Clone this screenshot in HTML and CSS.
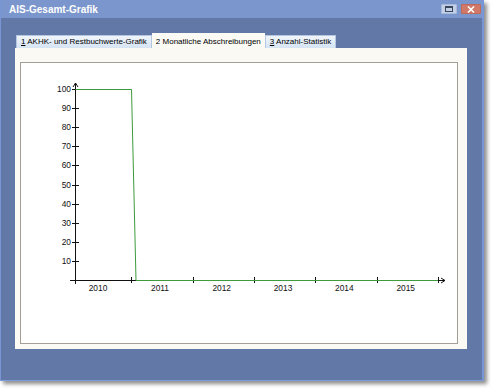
FILE: index.html
```html
<!DOCTYPE html>
<html lang="de">
<head>
  <meta charset="UTF-8">
  <title>AIS-Gesamt-Grafik</title>
  <link rel="stylesheet" href="styles.css">
</head>
<body>
  <div class="window">
    <div class="titlebar">
      <span class="title">AIS-Gesamt-Grafik</span>
      <div class="controls">
        <span class="ctl restore">
          <svg width="8" height="6" viewBox="0 0 8 6"><rect x="0.5" y="0.5" width="7" height="5" fill="none" stroke="#3a4660"/><line x1="0" y1="1.5" x2="8" y2="1.5" stroke="#3a4660"/></svg>
        </span>
        <span class="ctl close">
          <svg width="8" height="7" viewBox="0 0 8 7"><path d="M1 0.5 L7 6.5 M7 0.5 L1 6.5" stroke="#fff" stroke-width="1.6"/></svg>
        </span>
      </div>
    </div>

    <div class="client">
      <div class="tabs">
        <div class="tab"><u>1</u> AKHK- und Restbuchwerte-Grafik</div>
        <div class="tab active">2 Monatliche Abschreibungen</div>
        <div class="tab"><u>3</u> Anzahl-Statistik</div>
      </div>

      <div class="panel">
        <div class="chart-box">
          <svg class="chart" width="436" height="280" viewBox="21 63 436 280">
            <!-- y axis -->
            <g stroke="#111" stroke-width="1" fill="none">
              <line x1="75.5" y1="83" x2="75.5" y2="284"/>
              <polyline points="73,87 75.5,83 78,87"/>
              <line x1="72" y1="89.5" x2="79" y2="89.5"/>
              <line x1="72" y1="108.5" x2="79" y2="108.5"/>
              <line x1="72" y1="127.5" x2="79" y2="127.5"/>
              <line x1="72" y1="146.5" x2="79" y2="146.5"/>
              <line x1="72" y1="165.5" x2="79" y2="165.5"/>
              <line x1="72" y1="185.5" x2="79" y2="185.5"/>
              <line x1="72" y1="204.5" x2="79" y2="204.5"/>
              <line x1="72" y1="223.5" x2="79" y2="223.5"/>
              <line x1="72" y1="242.5" x2="79" y2="242.5"/>
              <line x1="72" y1="261.5" x2="79" y2="261.5"/>
              <!-- x axis -->
              <line x1="70" y1="280.5" x2="445" y2="280.5"/>
              <polyline points="441,278 445,280.5 441,283"/>
              <line x1="131.5" y1="277" x2="131.5" y2="283"/>
              <line x1="193.5" y1="277" x2="193.5" y2="283"/>
              <line x1="254.5" y1="277" x2="254.5" y2="283"/>
              <line x1="315.5" y1="277" x2="315.5" y2="283"/>
              <line x1="377.5" y1="277" x2="377.5" y2="283"/>
              <line x1="438.5" y1="277" x2="438.5" y2="283"/>
            </g>

            <polyline class="series" points="75.5,89.5 131.5,89.5 136,280.5 438,280.5"/>

            <g class="labels" text-anchor="end">
              <text x="71" y="92">100</text>
              <text x="71" y="111">90</text>
              <text x="71" y="130">80</text>
              <text x="71" y="149">70</text>
              <text x="71" y="168">60</text>
              <text x="71" y="188">50</text>
              <text x="71" y="207">40</text>
              <text x="71" y="226">30</text>
              <text x="71" y="245">20</text>
              <text x="71" y="264">10</text>
            </g>
            <g class="labels" text-anchor="middle">
              <text x="98" y="291">2010</text>
              <text x="160" y="291">2011</text>
              <text x="221.7" y="291">2012</text>
              <text x="283" y="291">2013</text>
              <text x="344.3" y="291">2014</text>
              <text x="405.7" y="291">2015</text>
            </g>
          </svg>
        </div>
      </div>
    </div>
  </div>
</body>
</html>
```

FILE: styles.css
```css
* {
  margin: 0;
  padding: 0;
  box-sizing: border-box;
}

html, body {
  background: #fff;
}

body {
  width: 497px;
  height: 392px;
  font-family: 'Liberation Sans', Arial, sans-serif;
}

.window {
  width: 484px;
  height: 381px;
  background: #6279a7;
  border-left: 1px solid #7896d6;
  border-right: 2px solid #7896d6;
  border-bottom: 1px solid #7e9ad8;
  box-shadow: 3px 3px 4px rgba(0, 0, 0, 0.45);
}

.titlebar {
  height: 18px;
  background: #7b96cc;
  display: flex;
  align-items: center;
  justify-content: space-between;
  padding: 0 1px 0 8px;
}

.title {
  color: #fff;
  font-weight: bold;
  font-size: 10px;
}

.controls {
  display: flex;
  gap: 4px;
}

.ctl {
  height: 10px;
  display: flex;
  align-items: center;
  justify-content: center;
  border-radius: 1px;
}

.ctl.restore {
  width: 16px;
  background: #c3cfe4;
  border: 1px solid #a9bbdc;
}

.ctl.close {
  width: 20px;
  background: #d27868;
  border: 1px solid #c06a5a;
}

.client {
  padding: 15px 0 0 14px;
}

.tabs {
  display: flex;
  align-items: flex-end;
  height: 15px;
  padding-left: 1px;
}

.tab {
  height: 13px;
  padding: 0 4px;
  font-size: 8px;
  line-height: 12px;
  color: #000;
  white-space: nowrap;
  background: linear-gradient(#f0f5fb, #d5e3f4);
  border: 1px solid #b4c6e2;
  border-bottom: none;
}

.tab.active {
  height: 15px;
  line-height: 15px;
  padding: 0 3px;
  background: #fbfaf5;
  border-color: #fbfaf5;
}

.panel {
  width: 452px;
  height: 301px;
  background: #faf9f4;
  padding: 14px 9px 5px 5px;
}

.chart-box {
  width: 438px;
  height: 282px;
  background: #fff;
  border: 1px solid #a39f97;
}

.chart {
  display: block;
}

.series {
  fill: none;
  stroke: #3d9b3d;
  stroke-width: 1;
}

.labels text {
  font-family: 'Liberation Sans', Arial, sans-serif;
  font-size: 8.4px;
  fill: #111;
}
```
